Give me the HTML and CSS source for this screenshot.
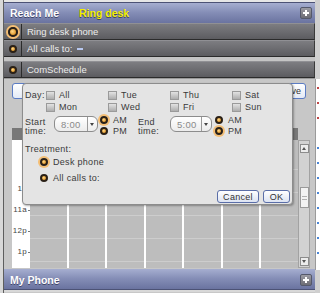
FILE: index.html
```html
<!DOCTYPE html>
<html lang="en">

<head>
    <meta charset="UTF-8">
    <title>Reach Me</title>
    <link rel="stylesheet" href="styles.css">
</head>

<body>
    <div class="screen">
        <div class="edge-left"></div>

        <div class="panel">
            <div class="topline"></div>

            <!-- Reach Me header -->
            <div class="bar">
                <span class="bar-title">Reach Me</span>
                <span class="bar-status">Ring desk</span>
                <span class="plus"></span>
            </div>

            <div class="row">
                <div class="row-cell"><span class="radio big on"></span></div>
                <div class="row-label">Ring desk phone</div>
            </div>
            <div class="row">
                <div class="row-cell"><span class="radio"></span></div>
                <div class="row-label">All calls to: <span class="dash"></span></div>
            </div>
            <div class="row-gap"></div>
            <div class="row">
                <div class="row-cell"><span class="radio"></span></div>
                <div class="row-label">ComSchedule</div>
            </div>

            <!-- schedule area -->
            <div class="content">
                <div class="toolbar">
                    <span class="tb-btn"></span>
                    <span class="tb-btn tb-right">Save</span>
                </div>

                <div class="calendar">
                    <div class="cal-head"></div>
                    <div class="cal-head"></div>
                    <div class="cal-corner"></div>

                    <div class="times">
                        <span>8</span>
                        <span>9</span>
                        <span>10</span>
                        <span>11a</span>
                        <span>12p</span>
                        <span>1p</span>
                    </div>

                    <div class="days">
                        <div></div><div></div><div></div><div></div><div></div><div></div><div></div>
                    </div>

                    <div class="scroll">
                        <span class="sc-btn sc-up"></span>
                        <span class="sc-thumb"></span>
                        <span class="sc-btn sc-down"></span>
                    </div>
                </div>

                <!-- edit dialog -->
                <div class="dialog">
                    <div class="day-grid">
                        <span class="day-label">Day:</span>
                        <label class="check"><span class="box"></span>All</label>
                        <label class="check"><span class="box"></span>Tue</label>
                        <label class="check"><span class="box"></span>Thu</label>
                        <label class="check"><span class="box"></span>Sat</label>
                        <span></span>
                        <label class="check"><span class="box"></span>Mon</label>
                        <label class="check"><span class="box"></span>Wed</label>
                        <label class="check"><span class="box"></span>Fri</label>
                        <label class="check"><span class="box"></span>Sun</label>
                    </div>

                    <div class="time-row">
                        <span class="time-label start">Start<br>time:</span>
                        <span class="select start-sel">8:00<span class="arrow"></span></span>
                        <span class="ampm">
                            <label class="opt"><span class="radio on"></span>AM</label>
                            <label class="opt"><span class="radio"></span>PM</label>
                        </span>
                        <span class="time-label end">End<br>time:</span>
                        <span class="select end-sel">5:00<span class="arrow"></span></span>
                        <span class="ampm">
                            <label class="opt"><span class="radio"></span>AM</label>
                            <label class="opt"><span class="radio on"></span>PM</label>
                        </span>
                    </div>

                    <div class="treat-label">Treatment:</div>
                    <label class="treat"><span class="radio on"></span>Desk phone</label>
                    <label class="treat"><span class="radio"></span>All calls to:</label>

                    <div class="actions">
                        <button class="btn cancel">Cancel</button>
                        <button class="btn ok">OK</button>
                    </div>
                </div>
            </div>

            <!-- My Phone header -->
            <div class="bar bar-bottom">
                <span class="bar-title">My Phone</span>
                <span class="plus"></span>
            </div>
            <div class="bottomline"></div>
        </div>

        <div class="edge-right">
            <div class="er-top"></div>
            <div class="er-mid">
                <i class="red"></i><i class="red"></i><i class="red"></i><i class="none"></i>
                <i></i><i></i><i></i><i></i><i></i><i></i><i></i><i></i>
            </div>
            <div class="er-bottom"></div>
        </div>
    </div>
</body>

</html>
```

FILE: styles.css
```css
* {
    box-sizing: border-box;
}

body {
    margin: 0;
    width: 320px;
    height: 293px;
    overflow: hidden;
    background: #d4d4d4;
    font-family: "Liberation Sans", Arial, sans-serif;
}

.screen {
    display: flex;
    height: 293px;
}

.edge-left {
    width: 4px;
    background: linear-gradient(to right, #d8d8d8 3px, #5e5e5e 3px);
}

.panel {
    width: 311px;
    display: flex;
    flex-direction: column;
    background: #c8c8c8;
}

.topline {
    height: 3px;
    background: linear-gradient(#e6e6e6 2px, #4c5275 2px);
}

/* blue headers */
.bar {
    height: 20px;
    display: flex;
    align-items: center;
    padding: 0 3px 0 6px;
    background: linear-gradient(#a6aed0, #838cb5 50%, #6a73a0);
    color: #fff;
    font-weight: bold;
    font-size: 10.5px;
    text-shadow: 0 1px 0 #3e4468;
}

.bar-title {
    width: 69px;
}

.bar-status {
    color: #f4f000;
}

.plus {
    margin-left: auto;
    width: 12px;
    height: 12px;
    border-radius: 2px;
    border: 1px solid #55596b;
    background: linear-gradient(#9c9ca4, #6c6c74);
    position: relative;
}

.plus::before,
.plus::after {
    content: "";
    position: absolute;
    background: #fff;
    left: 2px;
    top: 4px;
    width: 6px;
    height: 2px;
}

.plus::after {
    left: 4px;
    top: 2px;
    width: 2px;
    height: 6px;
}

.bar-bottom {
    padding-top: 2px;
}

.bottomline {
    height: 3px;
    background: linear-gradient(#4c5275 1px, #d8d8d8 1px);
}

/* dark option rows */
.row {
    height: 17px;
    display: flex;
    background: linear-gradient(#7d7d81, #5c5c60);
    border-top: 1px solid #909094;
    border-bottom: 1px solid #2b2b2b;
    border-right: 1px solid #3a3a3a;
}

.row-cell {
    width: 18px;
    display: flex;
    align-items: center;
    justify-content: center;
    border-right: 1px solid #2b2b2b;
}

.row-label {
    display: flex;
    align-items: center;
    padding-left: 5px;
    color: #ececec;
    font-size: 9.5px;
}

.dash {
    display: inline-block;
    width: 6px;
    height: 2px;
    margin-left: 5px;
    background: #b8c8f0;
}

.row-gap {
    height: 4px;
    background: #c4c4c4;
}

/* radio buttons */
.radio {
    display: inline-block;
    flex: none;
    width: 8px;
    height: 8px;
    border-radius: 50%;
    border: 2px solid #2a2016;
    background: radial-gradient(circle at 40% 40%, #ffd98a, #e39a2c 70%);
}

.radio.on {
    box-shadow: 0 0 0 2px #f4be74;
}

.radio.big {
    width: 10px;
    height: 10px;
}

/* schedule area */
.content {
    position: relative;
    height: 191px;
    background: #c7c7c7;
    border-top: 1px solid #9a9a9a;
}

.toolbar {
    height: 22px;
    display: flex;
    padding: 4px 9px 0 8px;
}

.tb-btn {
    width: 30px;
    height: 16px;
    border: 1px solid #5b7cc4;
    border-radius: 3px;
    background: linear-gradient(#ffffff, #e4eaf6);
    font-size: 9px;
    color: #333;
    text-align: right;
    padding: 2px 4px 0 0;
}

.tb-right {
    margin-left: auto;
}

.calendar {
    margin: 27px 0 0 8px;
    display: grid;
    grid-template-columns: 18px 268px 12px;
    grid-template-rows: 12px 128px;
}

.cal-head {
    background: #787878;
}

.cal-corner {
    background: #c7c7c7;
}

.times {
    background: #fff;
    display: flex;
    flex-direction: column;
    padding-top: 2px;
}

.times span {
    position: relative;
    height: 23px;
    line-height: 10px;
    font-size: 8px;
    color: #444;
    text-align: right;
    padding-right: 3px;
    letter-spacing: 0.3px;
}

.times span::after {
    content: "";
    position: absolute;
    right: 0;
    top: 5px;
    width: 2px;
    height: 1px;
    background: #777;
}

.days {
    display: grid;
    grid-template-columns: repeat(7, 1fr);
    gap: 2px;
    background: #fff;
}

.days div {
    background: repeating-linear-gradient(#bdbdbd 0 22px, #cdcdcd 22px 23px) 0 7px;
}

.scroll {
    display: flex;
    flex-direction: column;
    align-items: center;
    padding: 3px 0 1px;
    background: #d2d2d2;
    border: 1px solid #a2a2a2;
}

.sc-btn {
    width: 9px;
    height: 9px;
    border: 1px solid #8c8c8c;
    background: #ececec;
    position: relative;
}

.sc-btn::after {
    content: "";
    position: absolute;
    left: 1.5px;
    top: 2px;
    border-left: 2.5px solid transparent;
    border-right: 2.5px solid transparent;
    border-bottom: 3px solid #555;
}

.sc-down {
    margin-top: auto;
}

.sc-down::after {
    border-bottom: 0;
    border-top: 3px solid #555;
}

.sc-thumb {
    margin-top: 34px;
    width: 9px;
    height: 21px;
    border: 1px solid #9a9a9a;
    background: repeating-linear-gradient(#f2f2f2 0 2px, #b0b0b0 2px 3px) center / 5px 8px no-repeat, #f2f2f2;
}

/* edit dialog */
.dialog {
    position: absolute;
    left: 18px;
    top: 4px;
    width: 271px;
    height: 122px;
    padding: 5px 2px 2px 2px;
    background: #e4e4e4;
    border: 1px solid #8c8c8c;
    border-radius: 4px;
    box-shadow: 1px 1px 2px rgba(0, 0, 0, 0.3);
    font-size: 9px;
    letter-spacing: 0.3px;
    color: #3a3a3a;
}

.day-grid {
    display: grid;
    grid-template-columns: 21px repeat(4, 62px);
    grid-auto-rows: 12px;
}

.day-label,
.check {
    display: flex;
    align-items: center;
}

.check {
    gap: 4px;
}

.box {
    width: 9px;
    height: 9px;
    border: 1px solid #9a9a9a;
    background: linear-gradient(#e2e2e2, #aeaeae);
}

.time-row {
    display: flex;
    height: 21px;
    margin-top: 2px;
}

.time-label {
    line-height: 9px;
    padding-top: 3px;
}

.time-label.start {
    width: 29px;
}

.time-label.end {
    width: 32px;
}

.select {
    height: 16px;
    margin-top: 1px;
    display: flex;
    align-items: center;
    padding-left: 6px;
    border: 1px solid #8c8c8c;
    border-radius: 6px;
    background: linear-gradient(#ffffff, #ececec);
    color: #8a8a8a;
    font-size: 9.5px;
}

.start-sel {
    width: 44px;
}

.end-sel {
    width: 42px;
}

.arrow {
    margin-left: auto;
    width: 10px;
    height: 100%;
    border-left: 1px solid #9a9a9a;
    position: relative;
}

.arrow::after {
    content: "";
    position: absolute;
    left: 2px;
    top: 6px;
    border-left: 2.5px solid transparent;
    border-right: 2.5px solid transparent;
    border-top: 3px solid #444;
}

.ampm {
    display: flex;
    flex-direction: column;
    width: 38px;
    margin-left: 2px;
}

.ampm:last-child {
    margin-left: 3px;
}

.opt {
    height: 12px;
    display: flex;
    align-items: center;
    gap: 5px;
}

.treat-label {
    margin-top: 8px;
    height: 10px;
    line-height: 10px;
}

.treat {
    height: 16px;
    display: flex;
    align-items: center;
    gap: 5px;
    padding-left: 15px;
}

.actions {
    display: flex;
    justify-content: flex-end;
    gap: 4px;
    margin-top: 4px;
}

.btn {
    height: 13px;
    padding: 0;
    border: 1px solid #5a6ea8;
    border-radius: 3px;
    background: linear-gradient(#ffffff, #dce3f2);
    font-family: "Liberation Sans", Arial, sans-serif;
    font-size: 9px;
    letter-spacing: 0.3px;
    color: #333;
}

.cancel {
    width: 42px;
}

.ok {
    width: 27px;
}

/* strip of the next panel */
.edge-right {
    width: 5px;
    display: flex;
    flex-direction: column;
}

.er-top {
    height: 79px;
    background: #cfcfcf;
}

.er-mid {
    height: 191px;
    background: #fff;
    display: flex;
    flex-direction: column;
    align-items: flex-end;
    gap: 13px;
    padding: 8px 1px 0 0;
    border-left: 1px solid #9a9a9a;
}

.er-mid i {
    width: 2px;
    height: 2px;
    background: #4a86d6;
}

.er-mid i.red {
    background: #c04848;
}

.er-mid i.none {
    background: transparent;
}

.er-bottom {
    flex: 1;
    background: #cfcfcf;
}
```
